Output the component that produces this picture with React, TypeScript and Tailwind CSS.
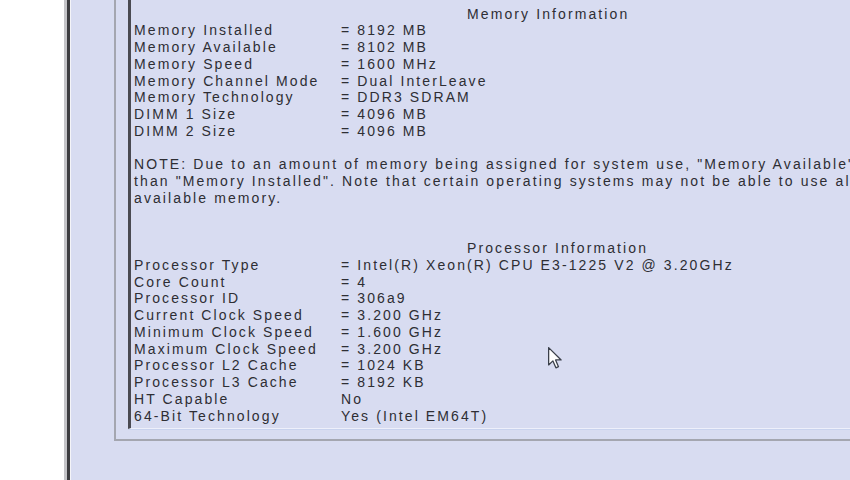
const memoryRows: [string, string][] = [
  ["Memory Installed", "= 8192 MB"],
  ["Memory Available", "= 8102 MB"],
  ["Memory Speed", "= 1600 MHz"],
  ["Memory Channel Mode", "= Dual InterLeave"],
  ["Memory Technology", "= DDR3 SDRAM"],
  ["DIMM 1 Size", "= 4096 MB"],
  ["DIMM 2 Size", "= 4096 MB"],
];

const processorRows: [string, string][] = [
  ["Processor Type", "= Intel(R) Xeon(R) CPU E3-1225 V2 @ 3.20GHz"],
  ["Core Count", "= 4"],
  ["Processor ID", "= 306a9"],
  ["Current Clock Speed", "= 3.200 GHz"],
  ["Minimum Clock Speed", "= 1.600 GHz"],
  ["Maximum Clock Speed", "= 3.200 GHz"],
  ["Processor L2 Cache", "= 1024 KB"],
  ["Processor L3 Cache", "= 8192 KB"],
  ["HT Capable", "No"],
  ["64-Bit Technology", "Yes (Intel EM64T)"],
];

function Row({ label, value }: { label: string; value: string }) {
  return (
    <div className="flex h-[16.75px] whitespace-nowrap">
      <div className="w-[207px] shrink-0">{label}</div>
      <div>{value}</div>
    </div>
  );
}

function Blank() {
  return <div className="h-[16.75px]" />;
}

function Cursor() {
  return (
    <svg
      className="absolute left-[548px] top-[347px]"
      width="14"
      height="22"
      viewBox="0 0 12 19"
    >
      <path
        d="M0.5 0.5 L0.5 15.5 L4.2 12 L6.8 18 L9 17 L6.5 11.2 L11.3 11.2 Z"
        fill="#ffffff"
        stroke="#3a3f4a"
        strokeWidth="1.1"
        strokeLinejoin="round"
      />
    </svg>
  );
}

export default function App() {
  return (
    <div className="relative flex h-[480px] w-[850px] overflow-hidden bg-white">
      <div className="w-[64px] shrink-0" />
      {/* window frame */}
      <div className="w-[3px] shrink-0 bg-[#c4c4c8]" />
      <div className="w-[3px] shrink-0 bg-[#3c3c40]" />
      <div className="w-[1px] shrink-0 bg-[#f4f4f8]" />
      <div className="flex-1 bg-[#d8dcf1] pl-[43px]">
        {/* group box */}
        <div className="h-[441px] w-[800px] border-b-[2px] border-l-[2px] border-b-[#a4a6b0] border-l-[#a4a6b0] pl-[12px]">
          <div className="h-[429px] border-b-[1px] border-b-[#eef0fb] shadow-[0_1px_0_#c9d3ee] border-l-[3px] border-l-[#4a4a52] pl-[3px] pt-[5.6px] font-['Liberation_Sans',Arial,sans-serif] text-[14px] leading-[16.75px] tracking-[2.1px] text-[#2e2e34]">
            <div className="h-[16.75px] pl-[333px] whitespace-nowrap">Memory Information</div>
            {memoryRows.map(([l, v]) => (
              <Row key={l} label={l} value={v} />
            ))}
            <Blank />
            <div className="whitespace-nowrap">
              NOTE: Due to an amount of memory being assigned for system use, "Memory Available" is less
            </div>
            <div className="whitespace-nowrap">
              than "Memory Installed". Note that certain operating systems may not be able to use all the
            </div>
            <div className="whitespace-nowrap">available memory.</div>
            <Blank />
            <Blank />
            <div className="h-[16.75px] pl-[333px] whitespace-nowrap">Processor Information</div>
            {processorRows.map(([l, v]) => (
              <Row key={l} label={l} value={v} />
            ))}
          </div>
        </div>
      </div>
      <Cursor />
    </div>
  );
}
